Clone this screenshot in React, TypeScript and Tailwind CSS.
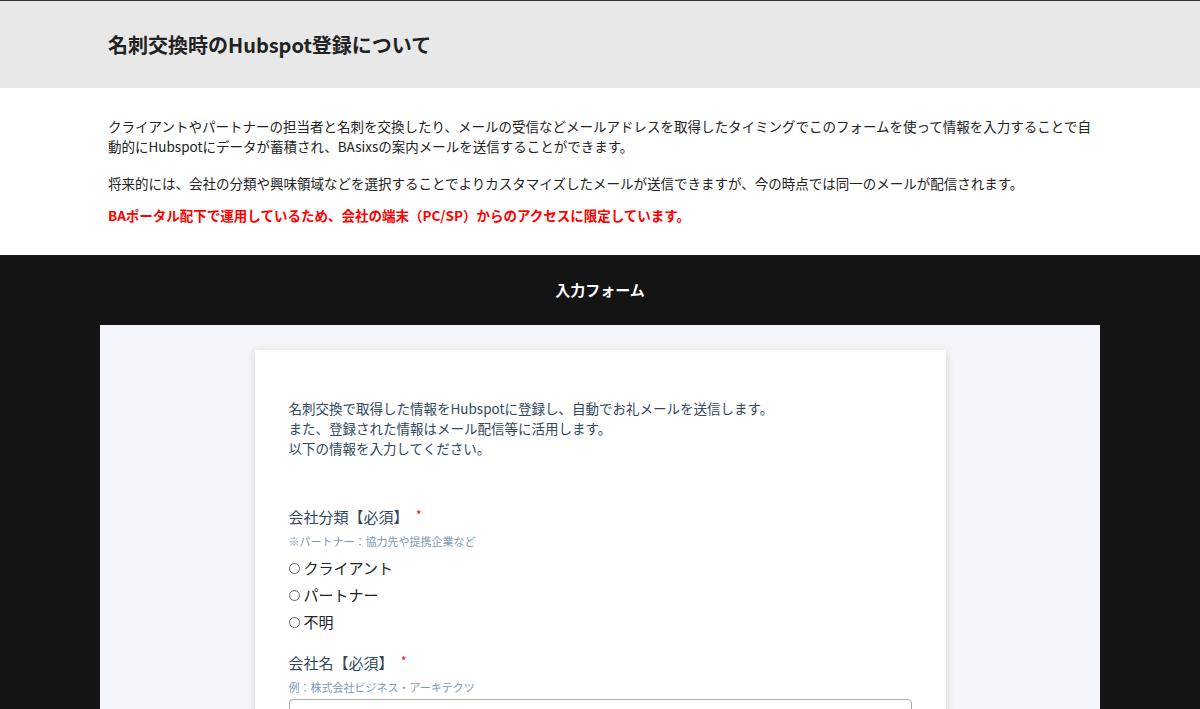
export default function App() {
  const f = { fontFamily: '"Noto Sans CJK JP", "Noto Sans", sans-serif' };
  return (
    <div style={f} className="w-[1200px] h-[709px] overflow-hidden bg-[#141414]">
      <div className="bg-[#e8e8e8] h-[88px] border-t border-[#333] flex items-center px-[108px]">
        <h1 className="text-[20px] font-bold text-[#222]">名刺交換時のHubspot登録について</h1>
      </div>
      <div className="bg-white h-[167px] px-[108px] pt-[28px] text-[13.5px] text-[#222] leading-[20px]">
        <p>クライアントやパートナーの担当者と名刺を交換したり、メールの受信などメールアドレスを取得したタイミングでこのフォームを使って情報を入力することで自動的にHubspotにデータが蓄積され、BAsixsの案内メールを送信することができます。</p>
        <p className="mt-[17px]">将来的には、会社の分類や興味領域などを選択することでよりカスタマイズしたメールが送信できますが、今の時点では同一のメールが配信されます。</p>
        <p className="mt-[12px] text-[#ff0000] font-bold">BAポータル配下で運用しているため、会社の端末（PC/SP）からのアクセスに限定しています。</p>
      </div>
      <div className="h-[70px] flex items-center justify-center text-white font-bold text-[15px]">入力フォーム</div>
      <div className="mx-[100px] bg-[#f2f6fa] h-[400px] pt-[25px] flex justify-center">
        <div className="w-[691px] bg-white shadow-[0_2px_8px_rgba(0,0,0,0.15)] px-[34px] pt-[48px] text-[#33475b]">
          <p className="text-[13.5px] leading-[20px]">名刺交換で取得した情報をHubspotに登録し、自動でお礼メールを送信します。<br />また、登録された情報はメール配信等に活用します。<br />以下の情報を入力してください。</p>
          <div className="mt-[48px] text-[15px]">会社分類【必須】 <span className="text-[#ff0000] text-[12px] align-top ml-1">*</span></div>
          <div className="mt-[4px] text-[11px] text-[#7c98b6]">※パートナー：協力先や提携企業など</div>
          <div className="mt-[8px] text-[15px] text-[#222] flex flex-col gap-[4px]">
            {["クライアント", "パートナー", "不明"].map((t) => (
              <label key={t} className="flex items-center gap-[4px] h-[23px]">
                <span className="w-[11px] h-[11px] rounded-full border border-[#666] inline-block" />
                {t}
              </label>
            ))}
          </div>
          <div className="mt-[18px] text-[15px]">会社名【必須】 <span className="text-[#ff0000] text-[12px] align-top ml-1">*</span></div>
          <div className="mt-[4px] text-[11px] text-[#7c98b6]">例：株式会社ビジネス・アーキテクツ</div>
          <div className="mt-[4px] h-[30px] border border-[#aaa] rounded-sm" />
        </div>
      </div>
    </div>
  );
}
